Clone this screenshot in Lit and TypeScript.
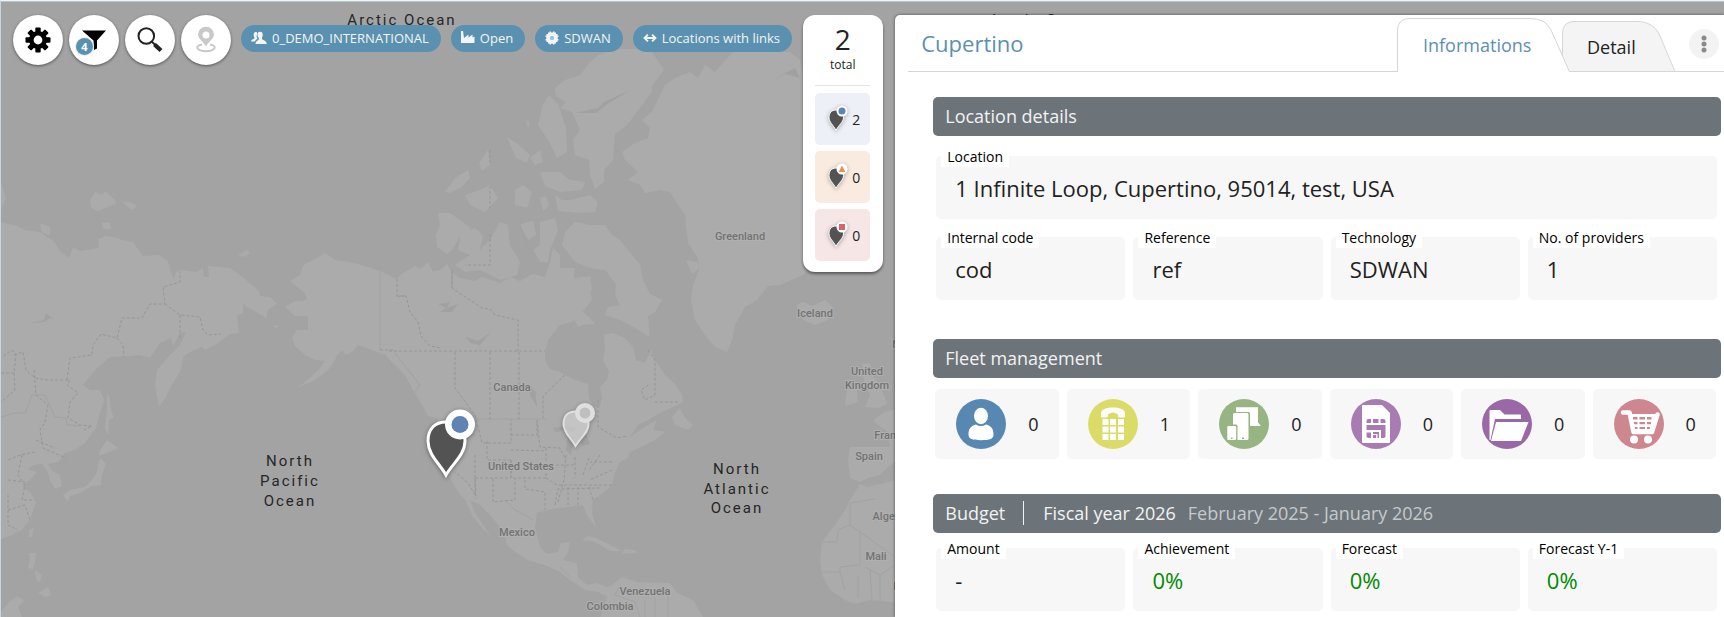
import { LitElement, html, css, svg } from "lit";
import { customElement, property, state } from "lit/decorators.js";
import { classMap } from "lit/directives/class-map.js";

type Shape = "circle" | "triangle" | "square";

const LAND = [
  // Siberia, Manchuria, China
  "1,222 8,224 15,225 25,230 40,232 52,240 55,243 60,251 69,258 73,247 80,251 98,248 99,241 97,240 105,236 118,238 122,240 133,242 143,256 158,255 168,261 170,270 174,279 176,272 180,270 196,272 203,268 204,277 209,277 208,266 230,268 245,279 259,291 260,296 270,297 277,304 268,310 266,318 255,311 247,307 243,304 243,313 237,316 239,333 230,334 217,344 205,350 202,347 190,352 183,357 181,370 170,388 166,397 159,407 155,385 157,370 170,355 180,345 186,332 180,333 173,346 171,338 160,343 150,358 140,355 130,356 110,357 95,370 83,385 90,390 100,390 104,400 99,417 96,428 85,443 75,450 65,453 58,462 48,464 52,471 60,475 62,486 55,489 50,480 48,472 42,464 33,465 28,470 37,472 30,480 22,486 30,492 36,502 30,520 22,530 12,535 1,539",
  "107,392 110,400 111,410 114,418 109,420 108,435 105,428 107,410",
  "107,440 118,448 110,452 104,454 99,456 100,450",
  "102,459 106,464 102,475 101,485 92,486 80,493 70,496 68,502 63,495 70,490 85,487 92,480 97,472 99,460",
  "29,530 34,528 32,537 29,537",
  "29,553 36,553 35,562 33,569 28,568 30,560",
  "35,570 42,575 39,583 36,578",
  "38,593 48,587 51,595 45,597",
  "1,612 8,603 17,596 25,601 18,607 22,617 1,617",
  "90,200 95,192 102,195 105,191 115,200 116,204 107,207 98,211 91,208",
  "122,202 130,202 137,206 132,210",
  "102,223 110,222 111,229 103,229",
  "40,223 50,227 50,236 42,232",
  "238,255 247,250 250,253 243,257",
  "1,183 6,198 1,210",
  "272,325 279,326 276,328",
  // North and Central America, northern South America
  "290,281 300,275 302,268 305,264 315,259 325,253 335,260 350,262 365,266 380,271 397,279 400,275 415,266 420,269 428,262 433,272 440,270 447,264 452,272 460,278 475,281 482,277 500,283 510,277 520,281 533,274 545,277 550,262 553,248 560,255 560,268 575,268 574,278 590,290 592,300 580,315 572,322 560,325 548,340 545,352 545,360 550,369 560,372 575,380 588,384 589,398 594,407 600,406 602,398 600,387 607,380 609,372 603,360 605,350 604,335 612,333 625,338 633,347 636,360 645,363 651,350 655,360 665,375 675,384 682,395 683,402 675,406 660,413 648,420 638,425 630,437 640,430 650,424 657,420 653,430 665,432 655,440 645,445 630,452 628,458 620,462 615,473 612,485 603,493 593,500 592,513 596,527 588,517 583,505 567,507 548,510 537,513 535,527 540,547 547,554 558,552 561,543 570,542 568,553 563,560 577,563 578,577 587,585 597,583 607,587 612,585 622,577 637,582 670,583 677,593 693,600 703,617 600,617 607,597 598,592 585,590 570,580 560,572 545,565 530,561 515,552 507,545 505,535 500,527 490,515 480,505 470,500 475,513 483,525 491,536 482,528 473,517 465,500 458,492 453,483 446,470 440,460 437,440 436,425 438,418 428,416 425,410 418,398 412,388 405,375 395,365 385,355 372,350 358,345 352,352 345,355 343,350 337,355 334,362 328,370 315,380 297,388 310,378 320,368 325,361 315,360 305,355 295,346 292,338 297,330 308,330 308,316 295,316 285,307 295,301 307,300 305,293 297,287",
  "582,540 588,536 596,538 610,545 622,551 610,551 600,545 592,541",
  "624,549 635,550 637,553 622,554",
  "680,408 685,418 693,425 688,430 675,425 672,417",
  // Arctic archipelago
  "438,213 450,213 460,220 471,228 460,236 452,250 447,254 437,247 436,235 440,225",
  "460,232 475,228 483,236 480,250 490,240 500,222 508,225 510,245 520,262 517,275 500,280 480,270 465,272 455,265 470,255 458,250 460,240",
  "520,225 533,220 536,235 528,240",
  "540,222 555,218 558,230 550,250 548,262 540,262 533,250 540,245",
  "562,245 565,232 575,222 590,225 605,225 612,235 620,240 632,255 640,264 643,280 650,294 662,300 655,312 648,316 650,337 635,328 620,320 605,315 608,307 620,305 615,295 616,284 605,270 590,268 575,262",
  "573,317 580,310 590,318 595,324 582,325 578,327",
  "575,278 590,276 592,290 584,300 576,292",
  "555,195 562,200 570,200 590,195 598,202 595,212 580,213 558,211",
  "540,172 560,172 570,180 585,182 582,190 560,192 545,186",
  "555,88 565,80 580,75 590,62 600,54 620,49 640,49 652,52 664,70 652,86 652,92 640,108 627,125 615,134 613,160 604,170 604,182 595,189 590,175 589,160 575,155 573,140 580,130 572,112 560,108 566,102 556,96",
  "549,95 558,104 566,128 567,152 557,158 548,140 538,125 543,105",
  "507,137 515,142 530,155 527,163 516,158",
  "445,192 455,178 468,170 470,178 460,188 450,193",
  "465,195 480,190 490,185 498,198 485,212 470,205",
  "479,163 488,150 490,165 482,171",
  "515,190 523,185 532,192 527,208 515,205",
  "540,198 546,196 549,206 543,211",
  "530,158 540,150 543,162 535,165",
  "526,120 530,123 528,129",
  // Greenland and Iceland
  "652,112 665,85 675,78 690,72 698,78 705,65 715,72 722,64 735,50 760,52 790,52 800,60 803,75 860,100 860,200 803,275 780,285 768,286 757,300 745,307 735,325 732,340 727,352 715,347 705,335 695,320 691,300 693,285 699,270 698,258 688,243 685,215 675,200 670,192 660,190 645,193 640,185 628,180 638,172 625,160 622,152 635,143 648,138 650,128 642,120",
  "686,260 697,262 700,268 692,274",
  "797,305 803,302 812,306 825,300 833,307 828,320 815,325 803,320",
  // Europe and Africa
  "862,364 870,363 872,375 880,385 887,403 880,408 865,407 870,395 864,380",
  "847,390 857,388 858,402 845,406",
  "900,408 885,412 873,420 878,425 888,432 890,447 850,447 848,460 850,478 860,482 868,478 880,475 890,465 900,460",
  "900,479 868,487 860,484 850,500 845,510 835,525 822,542 820,560 822,575 830,590 845,600 855,604 870,600 900,603",
];

const WATER = [
  "438,304 450,302 447,308 458,304 452,312 440,312 446,308",
  "466,337 478,341 490,333 480,345 470,343",
  "535,390 538,396 530,385 530,395 537,407",
  "553,428 565,426 578,428 572,432 565,430 556,432",
  "568,435 566,450 571,455 574,438",
  "578,436 586,434 590,444 582,446",
  "46,313 55,321 50,318 44,322 31,323 44,320",
  "520,225 524,240 540,262 530,250",
  "575,113 598,108 604,102 630,90 606,105 596,113",
  "800,78 785,74 770,82 780,76 795,68",
];

// Dashed administrative and national borders
const BORDERS =
  "M389,351H545M380,350H395M397,279V296H406L410,312L418,322L421,336L430,346L441,348M452,272V288L482,308L490,309L495,315L518,320V352M455,352V388L475,415M490,352V419M519,352V419M565,375L543,396V418M397,296L407,296M490,150V164M490,234V265H465M490,186V210M452,270V290" +
  "M598,400V427L617,438L628,436M648,350L655,360V395L645,400L641,390L650,384M655,402H680" +
  "M475,415L482,443H511V420M487,441V460L511,460M511,435H537V420M511,450L546,451M511,460V478H546M475,478H511V460M475,455V495L468,483L455,472M475,478L476,499M493,479V502L515,500V479M525,480V489L545,492V510M537,420L540,447L560,448L566,460M546,448V478L557,485H612M546,465H575M566,455L564,480L558,502M575,457V478M589,458L583,475M600,455L589,470M612,462H590M612,470L590,480M568,487V507M578,487V507M589,487L593,500M555,505L558,489L600,488" +
  "M1,373H14L16,355L12,350L2,357M14,355L23,352L26,370L35,378L48,380H70L67,385L78,393L70,402L68,418L80,425L92,426L84,430M67,380L70,358L92,355L93,345L101,334L117,338L122,318L142,318L150,304L165,304L163,287L180,282V271M117,338L123,345L124,357M165,304L180,315L200,317L203,330L208,335L221,334M180,315V340" +
  "M34,370L36,395L48,405L45,422L40,430L43,448L66,458M35,452L20,455L8,460M14,373L15,390L1,402M36,440L55,448M22,455L18,475L25,485L22,500H35M8,480L25,482M8,495V525L18,530M8,510L25,505L30,520";

const THIN_BORDERS =
  "M380,271V350M1,417L15,413H25L32,395L45,395L55,417L66,418L67,425L80,426M385,355L400,380M395,353L420,385L415,392M475,419H546M850,517V525L838,530L837,542H822M850,517V503L875,499M850,525L895,557M860,530V565L840,567V572H822M865,567L880,575L895,565M840,572L845,590M858,575V598M870,570L872,600M880,575V602M620,585L615,595L635,602L640,617M645,600V617M655,598V617M668,596V617M505,500L515,510L525,515L533,520M560,567L570,577";

const COUNTRIES: [string, number, number][] = [
  ["Greenland", 740, 240],
  ["Iceland", 815, 317],
  ["Canada", 512, 391],
  ["United", 867, 375],
  ["Kingdom", 867, 389],
  ["United States", 521, 470],
  ["Mexico", 517, 536],
  ["Venezuela", 645, 595],
  ["Colombia", 610, 610],
  ["France", 891, 439],
  ["Spain", 869, 460],
  ["Algeria", 890, 520],
  ["Mali", 876, 560],
  ["Norway", 911, 348],
  ["Nigeria", 911, 590],
];

const OCEANS: [string, number, number][] = [
  ["Arctic Ocean", 402, 25],
  ["Arctic Ocean", 1044, 25],
  ["North", 290, 466],
  ["Pacific", 290, 486],
  ["Ocean", 290, 506],
  ["North", 737, 474],
  ["Atlantic", 737, 494],
  ["Ocean", 737, 513],
];

@customElement("world-map")
class WorldMap extends LitElement {
  static styles = css`
    :host { display: block; background: #a3a3a3; }
    svg { display: block; width: 100%; height: 100%; }
    .land { fill: #ababab; }
    .water { fill: #a1a1a1; }
    .border { fill: none; stroke: #969696; stroke-dasharray: 3 2; }
    .thin { fill: none; stroke: #a2a2a2; }
    text { font-family: Roboto, "Liberation Sans", sans-serif; text-anchor: middle; }
    .country { font-size: 11px; font-weight: 500; fill: #737373; stroke: #b0b0b0; stroke-width: 2; paint-order: stroke; }
    .ocean { font-size: 15px; letter-spacing: 2px; fill: #262626; }
    .shade { filter: drop-shadow(0 1px 2px rgba(0, 0, 0, 0.4)); }
    .muted { opacity: 0.7; }
  `;
  render() {
    return html`<svg role="img" aria-label="World map">
      ${LAND.map((p) => svg`<polygon class="land" points=${p} />`)}
      ${WATER.map((p) => svg`<polygon class="water" points=${p} />`)}
      <path class="thin" d=${THIN_BORDERS} />
      <path class="border" d=${BORDERS} />
      ${COUNTRIES.map(([t, x, y]) => svg`<text class="country" x=${x} y=${y}>${t}</text>`)}
      ${OCEANS.map(([t, x, y]) => svg`<text class="ocean" x=${x} y=${y}>${t}</text>`)}
      <g class="shade">
        <path d="M446 475C440 464 428 455 428 441C428 429 435 422 446 422S465 429 465 441C465 455 452 464 446 475Z" fill="#535353" stroke="#fff" stroke-width="3" />
        <circle cx="460" cy="424.500" r="15" fill="#fff" />
        <circle cx="460" cy="424.500" r="8.500" fill="#5f83b5" />
      </g>
      <g class="shade muted">
        <path d="M575.500 446C571 438 563.500 433 563.500 424C563.500 416 568 411.500 575.500 411.500S588.500 416 588.500 424C588.500 433 580 438 575.500 446Z" fill="#cfcfcf" stroke="#f6f6f6" stroke-width="2" />
        <circle cx="585" cy="413" r="10" fill="#f6f6f6" />
        <circle cx="585" cy="413" r="5.500" fill="#c8c8c8" />
      </g>
    </svg>`;
  }
}

@customElement("status-pin")
class StatusPin extends LitElement {
  @property() shape: Shape = "circle";
  static styles = css`
    :host { display: block; width: 20px; height: 28px; }
    svg { display: block; overflow: visible; filter: drop-shadow(0 1px 2px rgba(0, 0, 0, 0.3)); }
  `;
  render() {
    const mark = {
      circle: svg`<circle cx="15" cy="6" r="3.500" fill="#5f83b5" />`,
      triangle: svg`<path d="M15 2.500L18.300 9H11.700Z" fill="#e8914a" />`,
      square: svg`<rect x="12" y="3" width="6" height="6" fill="#da6366" />`,
    }[this.shape];
    return html`<svg width="20" height="28" viewBox="0 0 20 28" aria-hidden="true">
      <path d="M9 25.500C6.500 20 2 17.500 2 12.500C2 8 4.500 5 9 5S16.500 8 16.500 12.500C16.500 17.500 11.500 20 9 25.500Z" fill="#535353" stroke="#fff" />
      <circle cx="15" cy="6" r="5.500" fill="#fff" />${mark}
    </svg>`;
  }
}

const gearTeeth = [0, 45, 90, 135, 180, 225, 270, 315];

const icons = {
  gear: svg`<svg width="26" height="26" viewBox="0 0 26 26">
    ${gearTeeth.map((a) => svg`<rect x="10.300" y="0.500" width="5.400" height="7" rx="1" transform="rotate(${a} 13 13)" />`)}
    <circle cx="13" cy="13" r="6.700" fill="none" stroke="#000" stroke-width="4.600" /></svg>`,
  filter: svg`<svg width="26" height="26" viewBox="0 0 26 26"><path d="M1 3.500H25L16 13.500V21.500L13 23L12.500 13.500Z" /></svg>`,
  search: svg`<svg width="26" height="26" viewBox="0 0 26 26"><circle cx="9.300" cy="9" r="7.800" fill="none" stroke="#222" stroke-width="2" /><path d="M14.500 14.500L19 18.500" stroke="#222" stroke-width="2" /><path d="M17.500 17.500L24 23.500" stroke="#222" stroke-width="4.200" /></svg>`,
  place: svg`<svg width="26" height="28" viewBox="0 0 26 28" fill="#c9c9c9"><path fill-rule="evenodd" d="M13 20.500C11 16 5 13 5 8.500A8 7.700 0 0 1 21 8.500C21 13 15 16 13 20.500ZM13 5.500A3.500 3.500 0 1 0 13 12.500A3.500 3.500 0 1 0 13 5.500Z" /><path d="M9 18.600C5.500 19.300 4.300 20.300 4.300 21.500C4.300 23.500 8 25.200 13 25.200S21.700 23.500 21.700 21.500C21.700 20.300 20.500 19.300 17 18.600" fill="none" stroke="#c9c9c9" stroke-width="2" /></svg>`,
  users: svg`<svg width="16" height="14" viewBox="0 0 16 14"><path d="M4.500 1C6 .6 6.500 2 6 3.500C5.500 5 5.500 6.500 6.500 7.500C5 9 4 9.500 4 10.500H0C0 8.500 2.500 8 3.500 7.500C3.500 6 2.500 5 2.700 3.500C2.800 2 3.500 1 4.500 1ZM9 .8C11.200.8 12 2.400 11.700 4.300C11.500 5.800 11 6.500 11 7.500C11.200 9.500 15.500 9.200 15.800 13H4.500C4.700 9.500 8 9.500 8 7.500C7.500 6.500 6.600 5.800 6.500 4.300C6.400 2 7.200.8 9 .8Z" /></svg>`,
  factory: svg`<svg width="14" height="13" viewBox="0 0 14 13"><path d="M0 0H2L3 7L7.500 3.500V6.500L11.500 3.500V6.500L13.500 5.500V12H0Z" /></svg>`,
  chip: svg`<svg width="14" height="14" viewBox="0 0 14 14"><path fill-rule="evenodd" d="M3 1.500H4.500V.5H6V1.500H8V.5H9.500V1.500H11V3H12.500V4.500H13.500V6H12.700V8H13.500V9.500H12.500V11H11V12.500H9.500V13.500H8V12.700H6V13.500H4.500V12.500H3V11H1.500V9.500H.5V8H1.300V6H.5V4.500H1.500V3H3ZM5.500 5.500V8.500H8.500V5.500Z" /><rect x="6.300" y="6.300" width="1.400" height="1.400" /></svg>`,
  arrows: svg`<svg width="14" height="10" viewBox="0 0 15 10"><path d="M2 5H13M5.300 1.300L1.600 5L5.300 8.700M9.700 1.300L13.400 5L9.700 8.700" fill="none" stroke="#f4f4f4" stroke-width="2" /></svg>`,
};

const fleetIcons = {
  person: svg`<ellipse cx="25" cy="17" rx="7" ry="8.300" /><path d="M12.500 36C12.500 29 15 27 20 25.500C23.500 27.500 26.500 27.500 30 25.500C35 27 37.500 29 37.500 36C37.500 39.500 34 41.200 25 41.200S12.500 39.500 12.500 36Z" />`,
  phone: svg`<path d="M13 18V15C13 11 17 8.600 25 8.600S37 11 37 15V17.500C37 18.500 36.500 18.500 32 18.500C30 18.500 30 17.500 30 15.500Q25 11.500 20 15.500C20 17.500 20 18.500 18 18.500C14 18.500 13.500 18.500 13 18Z" />${[20, 27.5, 35].map((y) => [14.5, 22, 30].map((x) => svg`<rect x=${x} y=${y} width="6" height="6" />`))}`,
  devices: svg`<path d="M17 8.200H39V23.500L42 27H31V14.500Q31 13 29.500 13H17Z" /><path fill-rule="evenodd" d="M15.500 14H28Q29.500 14 29.500 15.500V39.500Q29.500 41 28 41H18.500V27Q18.500 25.500 17 25.500H14V15.500Q14 14 15.500 14ZM23 38.500V40H25V38.500Z" /><path fill-rule="evenodd" d="M9.500 27H16Q17.200 27 17.200 28V40Q17.200 41 16 41H9.500Q8.300 41 8.300 40V28Q8.300 27 9.500 27ZM12 38.500V40H13.500V38.500Z" />`,
  sim: svg`<path d="M12 6H31L39 14V43Q39 44 38 44H12Q11 44 11 43V7Q11 6 12 6Z" /><g fill="#a87cb2"><path d="M15.500 24V22Q15.500 20 17.500 20H20V24ZM22 20H27.500V24H22ZM29.500 20H32Q34.500 20 34.500 22V24H29.500ZM15.500 26H34.500V37Q34.500 39 32.500 39H30V31H15.500ZM15.500 33.500H20V39H17.500Q15.500 39 15.500 37ZM22 33H28V39H26.500V35H22ZM22 36H25V39H22Z" /></g>`,
  folder: svg`<path d="M7.500 41V12Q7.500 11 8.500 11H18L22.500 15.500H38Q39 15.500 39 16.500V20H13L8.500 41Z" /><path d="M14 23H46.500L39 42H9Z" />`,
  cart: svg`<path d="M9 13.500H15.500L19.500 33H38L43.500 15.500" fill="none" stroke="#fff" stroke-width="4.500" stroke-linecap="round" stroke-linejoin="round" /><path fill-rule="evenodd" d="M16 15H43L39 34H18.500ZM19 18V20.500H23.500V18ZM25.500 18V20.500H31V18ZM33 18V20.500H37.500V18ZM19.500 23V25.200H23.500V23ZM25.500 23V25.200H31V23ZM33 23V25.200H37V23ZM20 28V30H23.500V28ZM25.500 28V30H31V28ZM33 28V30H36V28Z" /><circle cx="20" cy="40.500" r="4" /><circle cx="34" cy="40.500" r="4" />`,
};

@customElement("app-root")
class AppRoot extends LitElement {
  @state() private tab = "Informations";

  static styles = css`
    :host { display: block; font-family: "Open Sans", "Noto Sans", sans-serif; color: #222; }
    * { box-sizing: border-box; }
    button { font: inherit; color: inherit; border: 0; padding: 0; cursor: pointer; }
    h1, h2, dl, dd, p { margin: 0; font-weight: 400; }
    .screen { position: relative; display: flex; justify-content: space-between; height: 100vh; overflow: hidden; border-left: 1px solid #c9d6df; border-top: 1px solid #edf3f7; padding-top: 14px; }
    .screen::before { content: ""; position: absolute; inset: 0 0 auto 0; height: 1px; background: #b9c4cb; z-index: 2; }
    world-map { position: absolute; inset: -1px 0 0 -1px; }
    .overlay { position: relative; flex: 1; min-width: 0; display: flex; align-items: flex-start; padding: 0 12px; }
    .tools { display: flex; flex: none; gap: 6px; }
    .tool { position: relative; width: 50px; height: 50px; border-radius: 50%; background: #fff; display: grid; place-items: center; box-shadow: 0 1px 3px rgba(0, 0, 0, 0.5); }
    .badge { position: absolute; left: 7px; bottom: 10px; width: 17px; height: 17px; border-radius: 50%; background: #5b91b0; box-shadow: 0 0 0 1px #e6eef3; color: #fff; font-size: 11px; font-weight: 700; line-height: 17px; text-align: center; }
    .chips { display: flex; gap: 10px; margin: 10px 0 0 10px; }
    .chip { display: flex; align-items: center; gap: 5px; height: 27px; padding: 0 12px 2px 10px; border-radius: 14px; background: #5b91b0; color: #f4f4f4; fill: #f4f4f4; font-size: 13px; white-space: nowrap; }
    .counter { flex: none; width: 80px; margin-left: auto; padding: 9px 13px 11px 12px; border-radius: 12px; background: #fff; box-shadow: 0 2px 3px rgba(0, 0, 0, 0.45); text-align: center; }
    .sum { font-size: 28px; line-height: 30px; }
    .sum-label { font-size: 12px; line-height: 22px; padding-bottom: 9px; margin-bottom: 7px; border-bottom: 1px solid #e4e4e4; }
    .counts { display: grid; gap: 6px; }
    .count { display: flex; align-items: center; justify-content: flex-end; gap: 5px; width: 100%; height: 52px; padding-right: 10px; border-radius: 5px; font-size: 14px; }
    .circle { background: #edf1f7; }
    .triangle { background: #faebe0; }
    .square { background: #f6e6e6; }
    .panel { position: relative; flex: none; width: 48.100%; height: 100%; background: #fff; border-radius: 5px 0 0 0; box-shadow: 0 0 3px rgba(0, 0, 0, 0.6); }
    .head { display: flex; align-items: flex-end; height: 57px; margin-left: 13px; padding: 0 5px 0 13px; border-bottom: 1px solid #d6d6d6; }
    h1 { flex: 1; align-self: center; font-size: 22px; line-height: 32px; color: #5b91b0; }
    .tabs { display: flex; margin-bottom: -1px; }
    .tab { position: relative; width: 113px; height: 51px; align-self: flex-end; margin-left: -8px; padding-left: 25px; background: none; text-align: left; font-size: 18px; line-height: 48px; }
    .tab.wide { width: 173px; height: 54px; z-index: 1; margin-left: 0; padding-left: 26px; line-height: 54px; }
    .tab svg { position: absolute; inset: 0; fill: #f4f4f4; stroke: #d6d6d6; }
    .tab.on { color: #5b91b0; }
    .tab.on svg { fill: #fff; }
    .tab span { position: relative; }
    .more { align-self: center; width: 30px; height: 30px; margin: 2px 0 0 14px; border-radius: 50%; background: #f3f3f3; display: grid; place-items: center; }
    .body { padding: 25px 3px 0 38px; }
    .bar { display: flex; align-items: center; height: 39px; padding: 0 12px 2px; border-radius: 5px; background: #6c747a; color: #f2f2f2; font-size: 18px; }
    .bar h2 { font-size: 18px; }
    .year { margin-left: 18px; padding-left: 19px; line-height: 24px; border-left: 1px solid #f2f2f2; }
    .range { margin-left: 12px; color: #c6c9cb; }
    .fields { display: grid; grid-template-columns: repeat(4, 1fr); gap: 18px 8px; margin: 20px 4px 39px 3px; }
    .fields.tight { margin-top: 15px; }
    .field { height: 63px; padding-left: 5px; border-radius: 5px; background: #f7f7f7; }
    .full { grid-column: 1 / -1; }
    dt { width: fit-content; margin-top: -9px; padding: 0 6px; background: #fff; color: #000; font-size: 14px; line-height: 20px; }
    dd { padding-left: 14px; font-size: 22px; line-height: 42px; white-space: nowrap; }
    .green { color: #008a00; }
    .fleet { display: grid; grid-template-columns: repeat(6, 1fr); gap: 8px; margin: 11px 5px 35px 2px; }
    .card { display: flex; align-items: center; height: 70px; padding-left: 21px; border-radius: 5px; background: #f7f7f7; font-size: 18px; }
    .card span { margin-left: 22px; }
    .disc { width: 50px; height: 50px; border-radius: 50%; fill: #fff; }
    .person { background: #5788b2; }
    .phone { background: #dbdc68; }
    .devices { background: #96b582; }
    .sim { background: #a87cb2; }
    .folder { background: #9a68a6; }
    .cart { background: #cf878f; }
  `;

  private tool(label: string, icon: unknown, count?: number) {
    return html`<button class="tool" aria-label=${label}>${icon}${count ? html`<span class="badge">${count}</span>` : ""}</button>`;
  }

  private field(label: string, value: string, extra = {}) {
    return html`<div class=${classMap({ field: true, ...extra })}>
      <dt>${label}</dt>
      <dd class=${classMap({ green: value.endsWith("%") })}>${value}</dd>
    </div>`;
  }

  private tabButton(name: string, wide: boolean, w: number, h: number, d: string) {
    const on = this.tab === name;
    return html`<button role="tab" aria-selected=${on} class=${classMap({ tab: true, wide, on })} @click=${() => (this.tab = name)}>
      <svg width=${w} height=${h} aria-hidden="true"><path d=${d} /></svg><span>${name}</span>
    </button>`;
  }

  render() {
    const chips: [unknown, string][] = [
      [icons.users, "0_DEMO_INTERNATIONAL"],
      [icons.factory, "Open"],
      [icons.chip, "SDWAN"],
      [icons.arrows, "Locations with links"],
    ];
    const counts: [Shape, number][] = [["circle", 2], ["triangle", 0], ["square", 0]];
    const fleet: [keyof typeof fleetIcons, number][] = [
      ["person", 0], ["phone", 1], ["devices", 0], ["sim", 0], ["folder", 0], ["cart", 0],
    ];
    return html`<main class="screen">
      <world-map></world-map>
      <div class="overlay">
        <div class="tools">
          ${this.tool("Settings", icons.gear)}${this.tool("Filters", icons.filter, 4)}
          ${this.tool("Search", icons.search)}${this.tool("Locate", icons.place)}
        </div>
        <div class="chips">${chips.map(([icon, text]) => html`<button class="chip">${icon}<span>${text}</span></button>`)}</div>
        <aside class="counter">
          <p class="sum">2</p>
          <p class="sum-label">total</p>
          <div class="counts">
            ${counts.map(([shape, n]) => html`<button class="count ${shape}"><status-pin .shape=${shape}></status-pin>${n}</button>`)}
          </div>
        </aside>
      </div>
      <section class="panel">
        <header class="head">
          <h1>Cupertino</h1>
          <div class="tabs" role="tablist">
            ${this.tabButton("Informations", true, 174, 54, "M.5 55V13Q.5 .5 12 .5H132C143 .5 150 4 154 12L173 55")}
            ${this.tabButton("Detail", false, 114, 51, "M.5 50.5V13Q.5 .5 12 .5H75C87 .5 94 6 98 15L113 50.500Z")}
          </div>
          <button class="more" aria-label="More">
            <svg width="6" height="18" fill="#8a8a8a"><circle cx="3" cy="3" r="2.500" /><circle cx="3" cy="9" r="2.500" /><circle cx="3" cy="15" r="2.500" /></svg>
          </button>
        </header>
        <div class="body">
          <div class="bar"><h2>Location details</h2></div>
          <dl class="fields">
            ${this.field("Location", "1 Infinite Loop, Cupertino, 95014, test, USA", { full: true })}
            ${this.field("Internal code", "cod")}${this.field("Reference", "ref")}
            ${this.field("Technology", "SDWAN")}${this.field("No. of providers", "1")}
          </dl>
          <div class="bar"><h2>Fleet management</h2></div>
          <div class="fleet">
            ${fleet.map(([kind, n]) => html`<div class="card"><svg class="disc ${kind}" viewBox="0 0 50 50" aria-label=${kind}>${fleetIcons[kind]}</svg><span>${n}</span></div>`)}
          </div>
          <div class="bar"><h2>Budget</h2><span class="year">Fiscal year 2026</span><span class="range">February 2025 - January 2026</span></div>
          <dl class="fields tight">
            ${this.field("Amount", "-")}${this.field("Achievement", "0%")}
            ${this.field("Forecast", "0%")}${this.field("Forecast Y-1", "0%")}
          </dl>
        </div>
      </section>
    </main>`;
  }
}
